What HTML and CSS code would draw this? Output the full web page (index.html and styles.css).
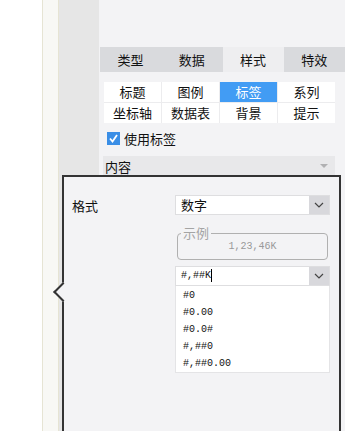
FILE: index.html
```html
<!DOCTYPE html>
<html lang="zh">
<head>
  <meta charset="UTF-8" />
  <title>标签设置</title>
  <link rel="stylesheet" href="styles.css">
</head>
<body>
  <div class="blank"></div>
  <div class="rail"></div>
  <div class="side"></div>

  <div class="panel">
    <div class="tabs">
      <div class="tab">类型</div>
      <div class="tab">数据</div>
      <div class="tab active">样式</div>
      <div class="tab">特效</div>
    </div>

    <div class="subtabs">
      <div class="sub">标题</div>
      <div class="sub">图例</div>
      <div class="sub active">标签</div>
      <div class="sub">系列</div>
      <div class="sub">坐标轴</div>
      <div class="sub">数据表</div>
      <div class="sub">背景</div>
      <div class="sub">提示</div>
    </div>

    <label class="check">
      <svg width="13" height="13" viewBox="0 0 13 13"><rect width="13" height="13" fill="#3a8ee6"/><path d="M3 6.5 L5.5 9.5 L10 3" stroke="#fff" stroke-width="1.8" fill="none"/></svg>
      使用标签
    </label>

    <div class="section">
      <span>内容</span>
      <span class="tri"></span>
    </div>
  </div>

  <div class="popup">
    <div class="row">
      <div class="lbl">格式</div>
      <div class="select">
        <span class="val">数字</span>
        <span class="btn"><svg width="10" height="6" viewBox="0 0 10 6"><path d="M1 1 L5 5 L9 1" stroke="#444" stroke-width="1.2" fill="none"/></svg></span>
      </div>
    </div>

    <fieldset class="sample">
      <legend>示例</legend>
      <div class="sample-val">1,23,46K</div>
    </fieldset>

    <div class="combo">
      <span class="val mono">#,##K<i class="caret"></i></span>
      <span class="btn"><svg width="10" height="6" viewBox="0 0 10 6"><path d="M1 1 L5 5 L9 1" stroke="#444" stroke-width="1.2" fill="none"/></svg></span>
    </div>
    <ul class="list mono">
      <li>#0</li>
      <li>#0.00</li>
      <li>#0.0#</li>
      <li>#,##0</li>
      <li>#,##0.00</li>
    </ul>
  </div>
</body>
</html>
```

FILE: styles.css
```css
body { margin: 0; height: 431px; display: flex; overflow: hidden; font-family: "Noto Sans CJK SC", sans-serif; font-size: 13px; color: #111; background: #fff; }
.blank { width: 42px; background: #fff; }
.rail { width: 15px; background: #f8f8f5; border-left: 1px solid #e6e4d4; border-right: 1px solid #e6e4d4; }
.side { width: 40px; background: #e6e6e6; }
.panel { flex: 1; background: #f3f3f5; padding-top: 47px; }

.tabs { display: flex; margin-left: 1px; height: 25px; }
.tab { flex: 1; background: #d9dadd; text-align: center; line-height: 25px; }
.tab.active { background: #eeeef0; }

.subtabs { display: grid; grid-template-columns: repeat(4, 57px); gap: 1px; margin: 10px 0 0 5px; width: 231px; background: #ececee; }
.sub { background: #fff; height: 20px; line-height: 20px; text-align: center; }
.sub.active { background: #429cf4; color: #fff; }

.check { display: flex; align-items: center; gap: 4px; margin: 9px 0 0 8px; height: 13px; }

.section { display: flex; justify-content: space-between; align-items: center; margin: 11px 10px 0 4px; height: 20px; background: #e8e8ea; padding: 0 7px 0 2px; }
.tri { width: 0; height: 0; border-left: 4px solid transparent; border-right: 4px solid transparent; border-top: 4px solid #b0b0b2; }

.popup { position: absolute; left: 62px; top: 175px; width: 279px; height: 256px; box-sizing: border-box; background: #f3f3f5; border: 2px solid #333; border-bottom: none; padding: 18px 0 0 8px; }
.popup::before { content: ""; position: absolute; left: -8px; top: 108px; width: 14px; height: 14px; box-sizing: border-box; background: #f3f3f5; border-left: 2px solid #333; border-bottom: 2px solid #333; transform: rotate(45deg); }

.row { display: flex; align-items: center; height: 20px; }
.lbl { width: 103px; }
.select, .combo { display: flex; width: 155px; height: 20px; background: #fff; border: 1px solid #dedee0; box-sizing: border-box; }
.val { flex: 1; line-height: 18px; padding-left: 5px; }
.btn { width: 20px; background: #d8d8dc; display: flex; align-items: center; justify-content: center; }

.sample { margin: 12px 0 0 105px; width: 151px; height: 33px; box-sizing: border-box; border: 1px solid #b0b0b0; border-radius: 4px; padding: 1px 0 0; }
.sample legend { color: #a4a4a4; padding: 0 2px; margin-left: 3px; line-height: 12px; }
.sample-val { text-align: center; font-family: "Liberation Mono", monospace; font-size: 10px; color: #999; line-height: 14px; }

.combo { margin: 6px 0 0 103px; height: 20px; }
.mono { font-family: "Liberation Mono", monospace; font-size: 10px; }
.combo .val { font-size: 10px; }
.caret { display: inline-block; width: 1px; height: 13px; background: #000; vertical-align: middle; }

.list { list-style: none; margin: 0 0 0 103px; padding: 1px 0 0 7px; width: 155px; box-sizing: border-box; background: #fff; border: 1px solid #e4e4e6; border-top: none; }
.list li { height: 17px; line-height: 17px; }
```
